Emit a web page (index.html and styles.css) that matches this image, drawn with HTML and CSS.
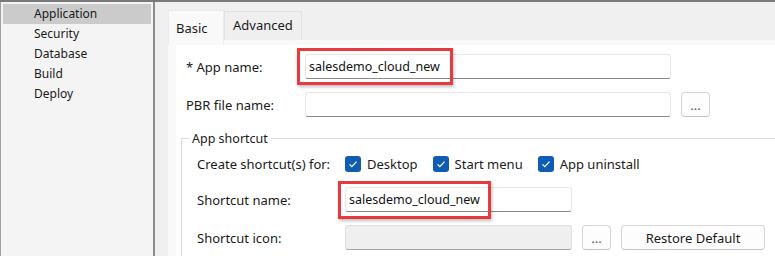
FILE: index.html
```html
<!DOCTYPE html>
<html lang="en">
<head>
    <meta charset="UTF-8">
    <title>Application Properties</title>
    <link rel="stylesheet" href="styles.css">
</head>
<body>
    <div class="window">
        <ul class="nav">
            <li class="active">Application</li>
            <li>Security</li>
            <li>Database</li>
            <li>Build</li>
            <li>Deploy</li>
        </ul>
        <div class="main">
            <div class="tabs">
                <div class="tab selected">Basic</div>
                <div class="tab">Advanced</div>
            </div>
            <div class="page">
                <div class="content">
                    <div class="row">
                        <label class="lbl">* App name:</label>
                        <div class="field">
                            <input class="input wide" type="text" value="salesdemo_cloud_new">
                            <span class="mark mark-app"></span>
                        </div>
                    </div>
                    <div class="row">
                        <label class="lbl">PBR file name:</label>
                        <input class="input wide" type="text" value="">
                        <button class="btn dots">...</button>
                    </div>

                    <fieldset class="group">
                        <legend>App shortcut</legend>
                        <div class="row check-row">
                            <label class="lbl lbl-group">Create shortcut(s) for:</label>
                            <span class="check"><span class="box"><svg viewBox="0 0 16 16" width="16" height="16"><path d="M4.5 8.3l2.3 2.3 4.7-5" fill="none" stroke="#fff" stroke-width="1.2"/></svg></span>Desktop</span>
                            <span class="check"><span class="box"><svg viewBox="0 0 16 16" width="16" height="16"><path d="M4.5 8.3l2.3 2.3 4.7-5" fill="none" stroke="#fff" stroke-width="1.2"/></svg></span>Start menu</span>
                            <span class="check"><span class="box"><svg viewBox="0 0 16 16" width="16" height="16"><path d="M4.5 8.3l2.3 2.3 4.7-5" fill="none" stroke="#fff" stroke-width="1.2"/></svg></span>App uninstall</span>
                        </div>
                        <div class="row">
                            <label class="lbl lbl-group">Shortcut name:</label>
                            <div class="field">
                                <input class="input short" type="text" value="salesdemo_cloud_new">
                                <span class="mark mark-shortcut"></span>
                            </div>
                        </div>
                        <div class="row">
                            <label class="lbl lbl-group">Shortcut icon:</label>
                            <input class="input short" type="text" value="" disabled>
                            <button class="btn dots">...</button>
                            <button class="btn restore">Restore Default</button>
                        </div>
                    </fieldset>
                </div>
            </div>
        </div>
    </div>
</body>
</html>
```

FILE: styles.css
```css
body {
    margin: 0;
    background-color: #f0f0f0;
    font-family: "Noto Sans", "Liberation Sans", sans-serif;
    font-size: 12px;
    color: #1a1a1a;
    overflow: hidden;
}

.window {
    display: flex;
    height: 256px;
    border-top: 2px solid #7a7a7a;
    box-sizing: border-box;
}

/* Left navigation */
.nav {
    list-style: none;
    margin: 0;
    padding: 2px 2px 0 2px;
    width: 148px;
    flex-shrink: 0;
    background-color: #f4f4f4;
    border-left: 1px solid #a0a0a0;
    border-right: 2px solid #8c8c8c;
}

.nav li {
    height: 20px;
    line-height: 20px;
    padding-left: 31px;
}

.nav li.active {
    background-color: #cbcbcb;
}

/* Tabs */
.main {
    flex: 1;
    padding: 8px 0 0 13px;
    min-width: 0;
}

.tabs {
    display: flex;
    align-items: flex-end;
    height: 30px;
}

.tab {
    padding: 0 8px;
    height: 29px;
    line-height: 27px;
    background-color: #efefef;
    border: 1px solid #e2e2e2;
    border-bottom: none;
    box-sizing: border-box;
    font-size: 13px;
}

.tab.selected {
    width: 56px;
    height: 35px;
    line-height: 34px;
    margin-bottom: -5px;
    padding: 0 0 0 7px;
    background-color: #f9f9f9;
    border-color: #ebebeb;
    position: relative;
    z-index: 1;
}

.page {
    width: 640px;
    height: 220px;
    background-color: #f9f9f9;
    padding: 5px 0 0 8px;
    box-sizing: border-box;
}

.content {
    background-color: #ffffff;
    height: 100%;
    padding: 9px 0 0 10px;
    box-sizing: border-box;
    font-size: 13px;
}

/* Form rows */
.row {
    display: flex;
    align-items: center;
    height: 25px;
    margin-bottom: 13px;
}

.lbl {
    width: 119px;
    flex-shrink: 0;
}

.lbl-group {
    width: 148px;
}

.field {
    position: relative;
}

.input {
    height: 25px;
    box-sizing: border-box;
    border: 1px solid #e6e6e6;
    border-bottom: 1px solid #8a8a8a;
    border-radius: 3px;
    background-color: #ffffff;
    font-family: inherit;
    font-size: 12.5px;
    color: #111;
    padding: 0 4px 1px 3px;
    outline: none;
}

.input.wide {
    width: 366px;
}

.input.short {
    width: 227px;
}

.input:disabled {
    background-color: #efefef;
    border-color: #e0e0e0;
    border-bottom-color: #a8a8a8;
}

.btn {
    height: 25px;
    box-sizing: border-box;
    background-color: #fdfdfd;
    border: 1px solid #d6d6d6;
    border-bottom-color: #c2c2c2;
    border-radius: 4px;
    font-family: inherit;
    font-size: 13px;
    color: #1a1a1a;
    padding: 0;
}

.btn.dots {
    width: 29px;
    margin-left: 10px;
    color: #555;
}

.btn.restore {
    width: 144px;
    margin-left: 10px;
}

/* Red callouts drawn over the fields */
.mark {
    position: absolute;
    border: 3px solid #e8393c;
    box-shadow: 1px 2px 3px rgba(0, 0, 0, 0.25);
    pointer-events: none;
}

.mark-app {
    left: -8px;
    top: -6px;
    width: 150px;
    height: 31px;
}

.mark-shortcut {
    left: -7px;
    top: -6px;
    width: 147px;
    height: 32px;
}

/* Group box */
.group {
    margin: 3px 0 0 -5px;
    padding: 4px 0 0 15px;
    border: 1px solid #dadada;
    min-width: 0;
}

.group legend {
    padding: 0 3px;
    margin-left: -8px;
    font-size: 12.5px;
}

.check-row {
    margin-bottom: 11px;
}

.check {
    display: flex;
    align-items: center;
    margin-right: 15px;
}

.box {
    width: 16px;
    height: 16px;
    border-radius: 3px;
    background-color: #0f5cb4;
    margin-right: 6px;
    display: flex;
}
```
